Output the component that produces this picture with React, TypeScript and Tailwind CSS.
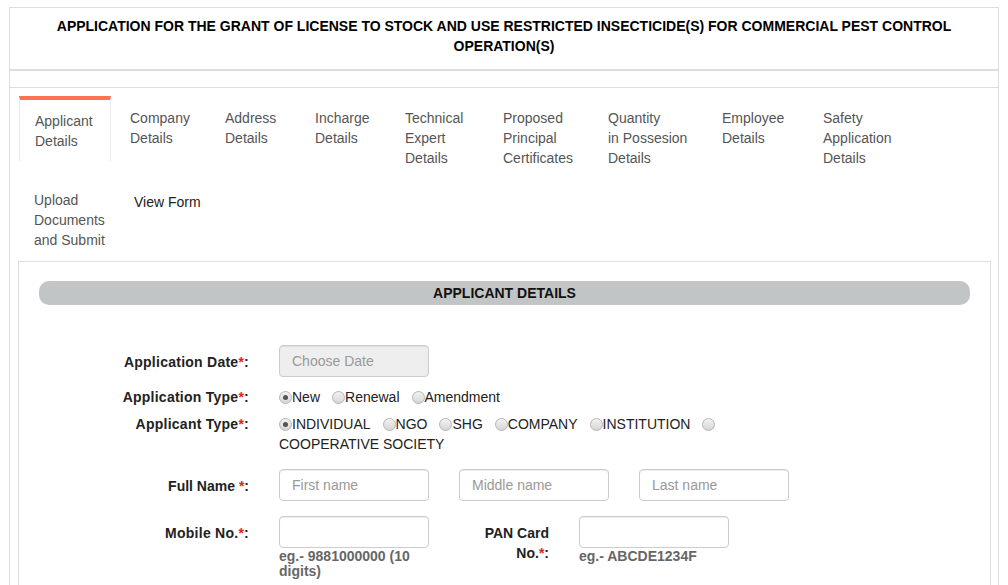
import React from 'react';

interface Tab {
  lines: string[];
  w: string;
  active?: boolean;
}

const TABS_ROW1: Tab[] = [
  { lines: ['Applicant', 'Details'], w: 'w-[96px]', active: true },
  { lines: ['Company', 'Details'], w: 'w-[95px]' },
  { lines: ['Address', 'Details'], w: 'w-[90px]' },
  { lines: ['Incharge', 'Details'], w: 'w-[90px]' },
  { lines: ['Technical', 'Expert', 'Details'], w: 'w-[98px]' },
  { lines: ['Proposed', 'Principal', 'Certificates'], w: 'w-[105px]' },
  { lines: ['Quantity', 'in Possesion', 'Details'], w: 'w-[114px]' },
  { lines: ['Employee', 'Details'], w: 'w-[101px]' },
  { lines: ['Safety', 'Application', 'Details'], w: 'w-[100px]' },
];

const font = "font-['Liberation_Sans',Arial,sans-serif]";

function TabItem({ tab }: { tab: Tab }) {
  if (tab.active) {
    return (
      <div className={`${tab.w} shrink-0`}>
        <div className="w-[92px] border-x border-[#eaeaea] border-t-4 border-t-[#ff7350] pt-[11px] pb-[10px] px-[15px] text-[#555] bg-white">
          {tab.lines.map((l) => (
            <div key={l}>{l}</div>
          ))}
        </div>
      </div>
    );
  }
  return (
    <div className={`${tab.w} shrink-0 px-[15px] pt-[12px] pb-[10px] text-[#555]`}>
      {tab.lines.map((l) => (
        <div key={l} className="whitespace-nowrap">
          {l}
        </div>
      ))}
    </div>
  );
}

function Radio({ checked }: { checked?: boolean }) {
  return (
    <span className="relative inline-block w-[13px] h-[13px] rounded-full border border-[#b5b5b5] bg-gradient-to-b from-[#f2f2f2] to-[#d6d6d6] shrink-0">
      {checked && (
        <span className="absolute left-[3px] top-[3px] w-[5px] h-[5px] rounded-full bg-[#555]" />
      )}
    </span>
  );
}

function RadioOpt({ label, checked }: { label: string; checked?: boolean }) {
  return (
    <span className="flex items-center mr-[12px]">
      <Radio checked={checked} />
      <span>{label}</span>
    </span>
  );
}

function Label({ text }: { text: string }) {
  return (
    <span className="font-bold text-[#222] tracking-[0.25px]">
      {text}
      <span className="text-[#e2231a]">*</span>:
    </span>
  );
}

const inputCls =
  'w-[150px] h-[32px] rounded-[4px] border border-[#ccc] px-[12px] text-[14px] placeholder:text-[#999] shadow-[inset_0_1px_1px_rgba(0,0,0,0.075)] outline-none';

export default function App() {
  return (
    <div className={`${font} text-[14px] leading-[20px] bg-white min-h-[585px] pt-[7px]`}>
      <div className="ml-[9px] w-[990px] border-x border-t border-[#ddd] min-h-[600px]">
        {/* Title */}
        <div className="border-b-2 border-[#ddd] pt-[8px] pb-[13px] px-[40px] text-center font-bold text-black">
          APPLICATION FOR THE GRANT OF LICENSE TO STOCK AND USE RESTRICTED INSECTICIDE(S) FOR COMMERCIAL PEST CONTROL
          OPERATION(S)
        </div>
        <div className="h-[17px] border-b border-[#ddd]" />

        {/* Tabs */}
        <div className="pl-[9px] pt-[8px]">
          <div className="flex items-start">
            {TABS_ROW1.map((t) => (
              <TabItem key={t.lines.join(' ')} tab={t} />
            ))}
          </div>
          <div className="flex items-start mt-[-2px]">
            <div className="w-[100px] shrink-0 px-[15px] pt-[14px] pb-[10px] text-[#555]">
              <div>Upload</div>
              <div>Documents</div>
              <div className="whitespace-nowrap">and Submit</div>
            </div>
            <div className="w-[120px] shrink-0 px-[15px] pt-[16px] text-[#222]">View Form</div>
          </div>
        </div>

        {/* Panel */}
        <div className="ml-[8px] mr-[7px] mt-[1px] border border-[#ddd] pt-[19px] pb-[40px]">
          <div className="mx-[20px] h-[24px] rounded-[10px] bg-[#c1c5c6] flex items-center justify-center font-bold text-[14px] text-[#111]">
            APPLICANT DETAILS
          </div>

          {/* Application date */}
          <div className="flex mt-[40px]">
            <div className="w-[230px] text-right pt-[7px]">
              <Label text="Application Date" />
            </div>
            <div className="pl-[30px]">
              <input className={`${inputCls} bg-[#eee]`} placeholder="Choose Date" readOnly />
            </div>
          </div>

          {/* Application type */}
          <div className="flex mt-[10px]">
            <div className="w-[230px] text-right">
              <Label text="Application Type" />
            </div>
            <div className="pl-[30px] flex items-center text-[#222]">
              <RadioOpt label="New" checked />
              <RadioOpt label="Renewal" />
              <RadioOpt label="Amendment" />
            </div>
          </div>

          {/* Applicant type */}
          <div className="flex mt-[7px]">
            <div className="w-[230px] text-right">
              <Label text="Applicant Type" />
            </div>
            <div className="pl-[30px] text-[#222]">
              <div className="flex items-center">
                <RadioOpt label="INDIVIDUAL" checked />
                <RadioOpt label="NGO" />
                <RadioOpt label="SHG" />
                <RadioOpt label="COMPANY" />
                <RadioOpt label="INSTITUTION" />
                <Radio />
              </div>
              <div>COOPERATIVE SOCIETY</div>
            </div>
          </div>

          {/* Full name */}
          <div className="flex mt-[15px]">
            <div className="w-[230px] text-right pt-[7px]">
              <span className="font-bold text-[#222]">
                Full Name <span className="text-[#e2231a]">*</span>:
              </span>
            </div>
            <div className="pl-[30px] flex gap-[30px]">
              <input className={inputCls} placeholder="First name" />
              <input className={inputCls} placeholder="Middle name" />
              <input className={inputCls} placeholder="Last name" />
            </div>
          </div>

          {/* Mobile + PAN */}
          <div className="flex mt-[15px]">
            <div className="w-[230px] text-right pt-[7px]">
              <Label text="Mobile No." />
            </div>
            <div className="pl-[30px] w-[210px] shrink-0">
              <input className={inputCls} />
              <div className="w-[150px] mt-[1px] text-[14px] leading-[15px] font-bold text-[#666]">
                eg.- 9881000000 (10 digits)
              </div>
            </div>
            <div className="w-[90px] shrink-0 text-right pt-[7px]">
              <span className="font-bold text-[#222]">
                PAN Card No.<span className="text-[#e2231a]">*</span>:
              </span>
            </div>
            <div className="pl-[30px]">
              <input className={inputCls} />
              <div className="mt-[1px] text-[14px] leading-[15px] font-bold text-[#666]">eg.- ABCDE1234F</div>
            </div>
          </div>
        </div>
      </div>
    </div>
  );
}
